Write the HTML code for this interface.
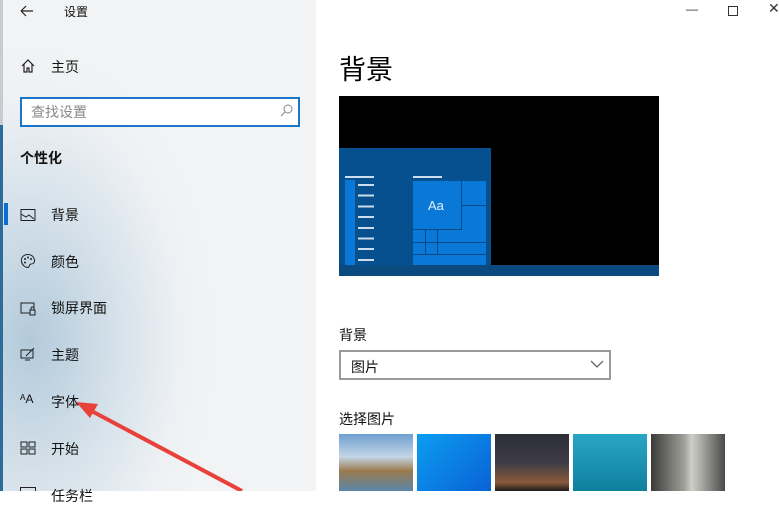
<!DOCTYPE html>
<html><head><meta charset="utf-8"><style>
*{margin:0;padding:0;box-sizing:border-box}
body{width:779px;height:491px;overflow:hidden;position:relative;background:#fff;font-family:"Liberation Sans","Noto Sans CJK SC",sans-serif;color:#111}
.side{position:absolute;left:0;top:0;width:316px;height:491px;background:radial-gradient(ellipse 190px 300px at 30px 340px,#b3cadb 0%,#d5e1ea 45%,#eef1f4 80%,#f2f3f4 100%);}
.a{position:absolute}
.t{position:absolute;font-size:14px;color:#111}
.ic{position:absolute;left:20px;width:16px;height:16px}
.right{position:absolute;left:316px;top:0;right:0;height:491px;background:#fff}
</style></head><body>
<div class="side">
<div class="a" style="left:0;top:125px;width:3px;height:366px;background:#2d6b9a"></div>
<div class="a" style="left:0;top:0;width:3px;height:125px;background:#c8ccd0"></div>
<svg class="a" style="left:20px;top:5px" width="14" height="12"><path d="M1 6H13M1 6L6 1M1 6L6 11" stroke="#222" stroke-width="1.2" fill="none"/></svg>
<div class="t" style="left:64px;top:3px;font-size:12px">设置</div>
<svg class="ic" style="top:58px" viewBox="0 0 16 16"><path d="M2 8L8 2L14 8M4 6V14H7V10H9V14H12V6" stroke="#222" stroke-width="1.2" fill="none"/></svg>
<div class="t" style="left:51px;top:57px">主页</div>
<div class="a" style="left:20px;top:97px;width:280px;height:30px;border:2px solid #1a74c8;background:#fff"></div>
<div class="t" style="left:31px;top:102px;color:#888">查找设置</div>
<svg class="a" style="left:280px;top:104px" width="13" height="13"><circle cx="8" cy="5" r="4" stroke="#888" fill="none"/><path d="M5 8L1 12" stroke="#888"/></svg>
<div class="t" style="left:20px;top:148px;font-weight:bold">个性化</div>
<div class="a" style="left:4px;top:203px;width:4px;height:22px;background:#0a6fd1"></div>
<svg class="ic" style="top:207px" viewBox="0 0 16 16"><rect x="1" y="2.5" width="14" height="11" stroke="#222" fill="none"/><path d="M1 7L6 10L9 8L14 12" stroke="#222" fill="none"/></svg>
<div class="t" style="left:51px;top:205px">背景</div>
<svg class="ic" style="top:253px" viewBox="0 0 16 16"><path d="M8 1.5C3 1.5 1 5 1.5 8.5C2 12 5 14.5 8 14.5C9.5 14.5 9 12.5 10 11.5C11 10.5 14.5 11.5 14.5 8C14.5 4 11.5 1.5 8 1.5Z" stroke="#222" fill="none"/><circle cx="5" cy="6" r="1" fill="#222"/><circle cx="8" cy="4.5" r="1" fill="#222"/><circle cx="11" cy="6" r="1" fill="#222"/><circle cx="5" cy="9.5" r="1" fill="#222"/></svg>
<div class="t" style="left:51px;top:252px">颜色</div>
<svg class="ic" style="top:300px" viewBox="0 0 16 16"><path d="M10 13H1V3H14V8" stroke="#222" fill="none"/><rect x="10" y="10" width="5" height="5" stroke="#222" fill="none"/><path d="M11 10V8.5A1.5 1.5 0 0 1 14 8.5V10" stroke="#222" fill="none"/></svg>
<div class="t" style="left:51px;top:298px">锁屏界面</div>
<svg class="ic" style="top:346px" viewBox="0 0 16 16"><rect x="1" y="4" width="12" height="8" stroke="#222" fill="none"/><path d="M5 14H10M6 10L14 2" stroke="#222" fill="none"/></svg>
<div class="t" style="left:51px;top:345px">主题</div>
<div class="t" style="left:20px;top:392px;font-size:12px">ᴬA</div>
<div class="t" style="left:51px;top:392px">字体</div>
<svg class="ic" style="top:440px" viewBox="0 0 16 16"><rect x="1" y="2" width="6" height="5" stroke="#222" fill="none"/><rect x="9" y="2" width="6" height="5" stroke="#222" fill="none"/><rect x="1" y="9" width="6" height="5" stroke="#222" fill="none"/><rect x="9" y="9" width="6" height="5" stroke="#222" fill="none"/></svg>
<div class="t" style="left:51px;top:439px">开始</div>
<div class="a" style="left:20px;top:487px;width:16px;height:4px;border:1px solid #222;border-bottom:none"></div>
<div class="t" style="left:51px;top:486px">任务栏</div>
</div>
<svg class="a" style="left:0;top:0" width="316" height="491"><path d="M242 491L86 408" stroke="#e8413a" stroke-width="4"/><path d="M76 402L98 404L90 418Z" fill="#e8413a"/></svg>
<div class="right"></div>
<div class="t" style="left:686px;top:2px;font-size:12px;color:#333">—</div>
<div class="a" style="left:728px;top:6px;width:10px;height:10px;border:1px solid #333"></div>
<div class="t" style="left:768px;top:0px;font-size:14px;color:#333">✕</div>
<div class="t" style="left:339px;top:48px;font-size:27px;color:#000">背景</div>
<div class="a" style="left:339px;top:96px;width:320px;height:180px;background:#000"></div>
<div class="a" style="left:339px;top:148px;width:152px;height:120px;background:#06508f"></div>
<div class="a" style="left:339px;top:265px;width:320px;height:11px;background:#0b4a7e"></div>
<div class="a" style="left:345px;top:176px;width:29px;height:2px;background:#cde"></div>
<div class="a" style="left:413px;top:176px;width:29px;height:2px;background:#cde"></div>
<div class="a" style="left:345px;top:180px;width:10px;height:85px;background:#0a78d7"></div>
<div class="a" style="left:358px;top:184px;width:16px;height:80px;background:repeating-linear-gradient(#cde 0 2px,transparent 2px 10.7px)"></div>
<div class="a" style="left:413px;top:181px;width:73px;height:84px;background:#0a78d7"></div>
<div class="a" style="left:413px;top:181px;width:49px;height:49px;border-right:1px solid #064a88;border-bottom:1px solid #064a88"></div>
<div class="a" style="left:462px;top:205px;width:24px;height:1px;background:#064a88"></div>
<div class="a" style="left:413px;top:242px;width:73px;height:1px;background:#064a88"></div>
<div class="a" style="left:413px;top:254px;width:73px;height:1px;background:#064a88"></div>
<div class="a" style="left:425px;top:230px;width:1px;height:25px;background:#064a88"></div>
<div class="a" style="left:437px;top:230px;width:1px;height:25px;background:#064a88"></div>
<div class="t" style="left:428px;top:198px;color:#e8f0fa;font-size:13px">Aa</div>
<div class="t" style="left:339px;top:325px">背景</div>
<div class="a" style="left:339px;top:350px;width:272px;height:30px;border:2px solid #999"></div>
<div class="t" style="left:351px;top:357px">图片</div>
<svg class="a" style="left:590px;top:360px" width="14" height="9"><path d="M1 1L7 7L13 1" stroke="#666" fill="none" stroke-width="1.3"/></svg>
<div class="t" style="left:339px;top:409px">选择图片</div>
<div class="a" style="left:339px;top:434px;width:74px;height:57px;background:linear-gradient(#6f9fd0 0%,#c4d6e6 40%,#9a7a4e 65%,#5a86a8 100%)"></div>
<div class="a" style="left:417px;top:434px;width:74px;height:57px;background:linear-gradient(135deg,#0b9df2,#0a62d4)"></div>
<div class="a" style="left:495px;top:434px;width:74px;height:57px;background:linear-gradient(#2c2d35,#3e3c48 50%,#8a5a3a 85%,#1c1c1c)"></div>
<div class="a" style="left:573px;top:434px;width:74px;height:57px;background:linear-gradient(#2aa6c4,#0f7f9e)"></div>
<div class="a" style="left:651px;top:434px;width:74px;height:57px;background:linear-gradient(90deg,#3a3a3a,#a0a09a 45%,#cfcfca 55%,#4a4a4a)"></div>
</body></html>
